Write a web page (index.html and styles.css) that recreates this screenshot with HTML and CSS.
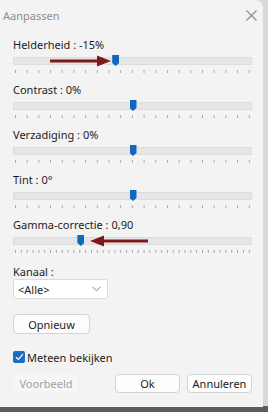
FILE: index.html
```html
<!DOCTYPE html>
<html lang="nl">
<head>
    <meta charset="UTF-8">
    <meta name="viewport" content="width=device-width, initial-scale=1.0">
    <title>Aanpassen</title>
    <link rel="stylesheet" href="styles.css">
</head>
<body>
    <div class="window">
        <div class="titlebar">
            <span class="title">Aanpassen</span>
            <svg class="close" width="11" height="11" viewBox="0 0 11 11">
                <path d="M0.5 0.5 L10.5 10.5 M10.5 0.5 L0.5 10.5" stroke="#8c8c8c" stroke-width="1.1" fill="none"/>
            </svg>
        </div>

        <div class="content">
            <div class="slider-group">
                <div class="label">Helderheid : -15%</div>
                <div class="track">
                    <span class="thumb" style="left: 42.7%"></span>
                    <svg class="arrow arrow-right" width="62" height="12" viewBox="0 0 62 12">
                        <path d="M0 4.5 H47 V0.5 L61 6 L47 11.5 V7.5 H0 Z" fill="#7e1a1c"/>
                    </svg>
                </div>
                <div class="ticks"></div>
            </div>

            <div class="slider-group">
                <div class="label">Contrast : 0%</div>
                <div class="track">
                    <span class="thumb" style="left: 50%"></span>
                </div>
                <div class="ticks"></div>
            </div>

            <div class="slider-group">
                <div class="label">Verzadiging : 0%</div>
                <div class="track">
                    <span class="thumb" style="left: 50%"></span>
                </div>
                <div class="ticks"></div>
            </div>

            <div class="slider-group">
                <div class="label">Tint : 0°</div>
                <div class="track">
                    <span class="thumb" style="left: 50%"></span>
                </div>
                <div class="ticks"></div>
            </div>

            <div class="slider-group">
                <div class="label">Gamma-correctie : 0,90</div>
                <div class="track">
                    <span class="thumb" style="left: 28%"></span>
                    <svg class="arrow arrow-left" width="58" height="12" viewBox="0 0 58 12">
                        <path d="M58 4.5 H14 V0.5 L0 6 L14 11.5 V7.5 H58 Z" fill="#7e1a1c"/>
                    </svg>
                </div>
                <div class="ticks ticks-fine"></div>
            </div>

            <div class="channel">
                <div class="label">Kanaal :</div>
                <div class="select">
                    <span>&lt;Alle&gt;</span>
                    <svg width="9" height="6" viewBox="0 0 9 6">
                        <path d="M0.5 0.8 L4.5 4.8 L8.5 0.8" stroke="#7a7a7a" stroke-width="1" fill="none"/>
                    </svg>
                </div>
            </div>

            <button class="btn btn-reset">Opnieuw</button>

            <label class="check">
                <span class="box">
                    <svg width="9" height="8" viewBox="0 0 9 8">
                        <path d="M1 4.2 L3.4 6.5 L8 1.2" stroke="#fff" stroke-width="1.2" fill="none"/>
                    </svg>
                </span>
                Meteen bekijken
            </label>

            <div class="actions">
                <button class="btn btn-disabled">Voorbeeld</button>
                <div class="actions-right">
                    <button class="btn">Ok</button>
                    <button class="btn">Annuleren</button>
                </div>
            </div>
        </div>
    </div>
</body>
</html>
```

FILE: styles.css
```css
html, body {
    margin: 0;
    height: 100%;
}
body {
    font-family: "Noto Sans", "Open Sans", sans-serif;
    font-size: 11px;
    color: #1b1b1b;
    background: linear-gradient(to bottom, #d6dad2 0, #d6dad2 406px, #5c5d5a 406px);
}
.window {
    width: 263px;
    height: 407px;
    background-color: #f3f3f3;
    border-top-right-radius: 8px;
    box-sizing: border-box;
}
.titlebar {
    height: 30px;
    display: flex;
    align-items: center;
    justify-content: space-between;
    padding: 0 6px 0 3px;
}
.title {
    color: #8d8d8d;
    font-size: 11px;
}
.content {
    padding: 7px 11px 0 13px;
    display: flex;
    flex-direction: column;
}
.slider-group {
    height: 45px;
}
.label {
    height: 16px;
    line-height: 16px;
    white-space: nowrap;
}
.track {
    position: relative;
    margin-top: 4px;
    height: 6px;
    background-color: #e6e6e6;
    border: 1px solid #dcdcdc;
    border-radius: 1px;
}
.thumb {
    position: absolute;
    top: -3px;
    width: 7px;
    height: 11px;
    margin-left: -3px;
    background-color: #1267c0;
    clip-path: polygon(0 0, 100% 0, 100% 72%, 50% 100%, 0 72%);
}
.arrow {
    position: absolute;
    top: -3px;
}
.arrow-right {
    left: 36px;
}
.arrow-left {
    left: 76px;
}
.ticks {
    margin: 5px 2px 0 2px;
    height: 3px;
    background-image: linear-gradient(to right, #a8a8a8 0, #a8a8a8 1px, transparent 1px);
    background-size: calc((100% - 1px) / 20) 3px;
    background-repeat: repeat-x;
}
.ticks-fine {
    background-size: calc((100% - 1px) / 40) 3px;
}
.channel {
    margin-top: 2px;
}
.select {
    margin-top: -1px;
    width: 95px;
    height: 20px;
    box-sizing: border-box;
    background-color: #fff;
    border: 1px solid #dadada;
    border-radius: 3px;
    display: flex;
    align-items: center;
    justify-content: space-between;
    padding: 0 6px 0 4px;
}
.btn {
    font-family: inherit;
    font-size: 11px;
    color: #1b1b1b;
    background-color: #fdfdfd;
    border: 1px solid #d3d3d3;
    border-radius: 4px;
    height: 19px;
    padding: 0;
    width: 65px;
}
.btn-reset {
    margin-top: 15px;
    width: 77px;
    height: 20px;
}
.check {
    margin-top: 16px;
    display: flex;
    align-items: center;
    gap: 2px;
    height: 14px;
}
.box {
    width: 12px;
    height: 12px;
    border-radius: 2px;
    background-color: #1b6cc2;
    display: flex;
    align-items: center;
    justify-content: center;
}
.actions {
    margin-top: 10px;
    display: flex;
    justify-content: space-between;
    padding-left: 1px;
}
.actions-right {
    display: flex;
    gap: 7px;
}
.btn-disabled {
    width: 64px;
    color: #a3a3a3;
    background-color: #f6f6f6;
    border-color: #f6f6f6;
}
```
